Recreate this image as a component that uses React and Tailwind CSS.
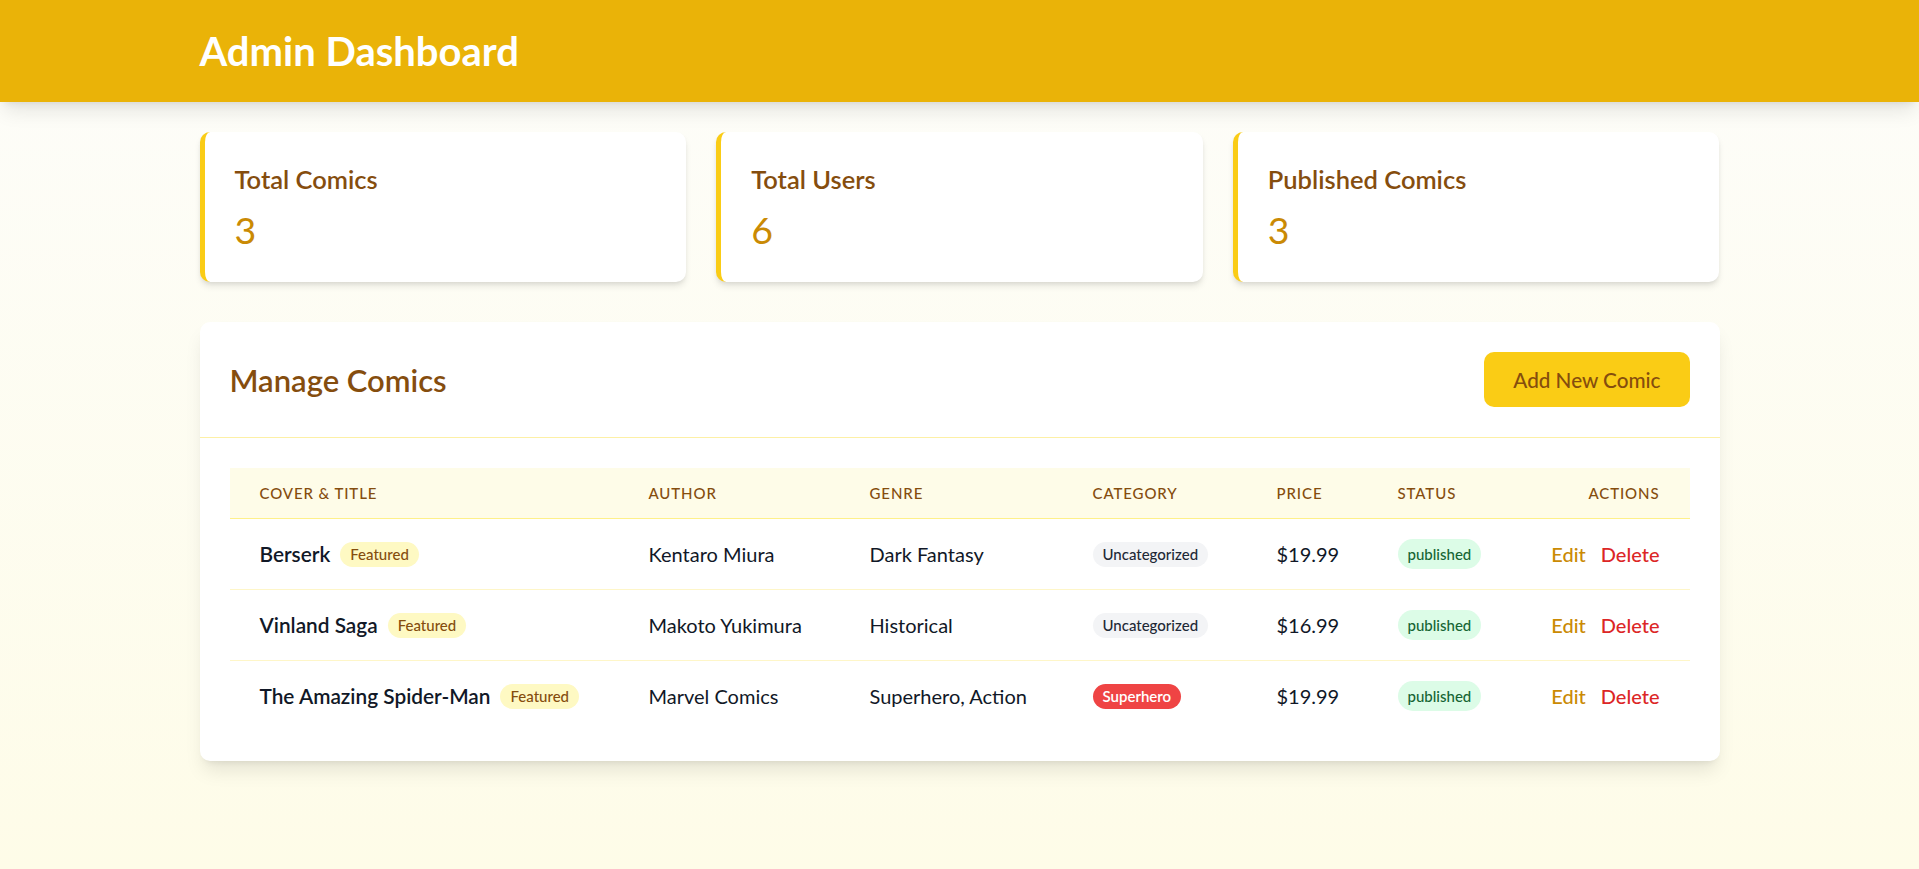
import React from "react";

const comics = [
  { title: "Berserk", author: "Kentaro Miura", genre: "Dark Fantasy", category: "Uncategorized", price: "$19.99" },
  { title: "Vinland Saga", author: "Makoto Yukimura", genre: "Historical", category: "Uncategorized", price: "$16.99" },
  { title: "The Amazing Spider-Man", author: "Marvel Comics", genre: "Superhero, Action", category: "Superhero", price: "$19.99" },
];

const stats = [
  { label: "Total Comics", value: "3" },
  { label: "Total Users", value: "6" },
  { label: "Published Comics", value: "3" },
];

const th = "px-[30px] py-[15px] text-[15px] leading-[20px] font-medium uppercase tracking-[0.06em] text-[#854d0e]";
const td = "px-[30px] py-[20px] text-[20px] leading-[30px] whitespace-nowrap";

export default function App() {
  return (
    <div className="min-h-screen bg-gradient-to-b from-[#fdfdfa] to-[#fefce8] font-['Lato','Open_Sans',sans-serif]">
      <header className="bg-[#eab308] shadow-[0_12.5px_19px_-4px_rgba(0,0,0,0.1),0_5px_7.5px_-5px_rgba(0,0,0,0.1)]">
        <div className="max-w-[1600px] mx-auto px-[40px] py-[28px]">
          <h1 className="text-[40px] leading-[46px] font-bold text-white">Admin Dashboard</h1>
        </div>
      </header>

      <main className="max-w-[1600px] mx-auto px-[40px] py-[30px]">
        <div className="grid grid-cols-3 gap-[30px] mb-[40px]">
          {stats.map((s) => (
            <div
              key={s.label}
              className="bg-white rounded-[10px] border-l-[5px] border-[#facc15] p-[30px] shadow-[0_5px_7.5px_-1.25px_rgba(0,0,0,0.1),0_2.5px_5px_-2.5px_rgba(0,0,0,0.1)]"
            >
              <h3 className="text-[25.5px] leading-[35px] font-semibold text-[#854d0e]">{s.label}</h3>
              <p className="mt-[10px] text-[37.5px] leading-[45px] text-[#ca8a04]">{s.value}</p>
            </div>
          ))}
        </div>

        <div className="bg-white rounded-[10px] overflow-hidden shadow-[0_12.5px_19px_-4px_rgba(0,0,0,0.1),0_5px_7.5px_-5px_rgba(0,0,0,0.1)]">
          <div className="flex items-center justify-between p-[30px] border-b border-[#fdf0a6]">
            <h2 className="text-[31px] leading-[40px] font-semibold text-[#854d0e]">Manage Comics</h2>
            <button className="bg-[#facc15] text-[#854d0e] text-[20.7px] leading-[30px] font-medium px-[29px] py-[12.5px] rounded-[10px]">
              Add New Comic
            </button>
          </div>

          <div className="p-[30px]">
            <table className="w-full table-fixed border-collapse">
              <thead className="bg-[#fefce8]">
                <tr className="border-b border-[#fef08a]">
                  <th className={`w-[389px] text-left ${th}`}>Cover &amp; Title</th>
                  <th className={`w-[221px] text-left ${th}`}>Author</th>
                  <th className={`w-[223px] text-left ${th}`}>Genre</th>
                  <th className={`w-[184px] text-left ${th}`}>Category</th>
                  <th className={`w-[121px] text-left ${th}`}>Price</th>
                  <th className={`w-[140px] text-left ${th}`}>Status</th>
                  <th className={`text-right ${th}`}>Actions</th>
                </tr>
              </thead>
              <tbody>
                {comics.map((c, i) => (
                  <tr key={c.title} className={i < comics.length - 1 ? "border-b border-[#fef6c8]" : ""}>
                    <td className={td}>
                      <div className="flex items-center h-[30px]">
                        <span className="text-[20.8px] font-semibold text-[#111827]">{c.title}</span>
                        <span className="ml-[10px] px-[10px] py-[2.5px] rounded-full bg-[#fef9c3] text-[#854d0e] text-[15px] leading-[20px] font-medium">Featured</span>
                      </div>
                    </td>
                    <td className={`${td} text-[#111827]`}>{c.author}</td>
                    <td className={`${td} text-[#111827]`}>{c.genre}</td>
                    <td className={td}>
                      <div className="flex items-center h-[30px]">
                        {c.category === "Superhero" ? (
                          <span className="px-[10px] py-[2.5px] rounded-full bg-[#ef4444] text-white text-[15px] leading-[20px] font-semibold">Superhero</span>
                        ) : (
                          <span className="px-[10px] py-[2.5px] rounded-full bg-[#f3f4f6] text-[#1f2937] text-[15px] leading-[20px] font-medium">Uncategorized</span>
                        )}
                      </div>
                    </td>
                    <td className={`${td} text-[#111827]`}>{c.price}</td>
                    <td className={td}>
                      <div className="flex items-center h-[30px]">
                        <span className="px-[10px] py-[5px] rounded-full bg-[#dcfce7] text-[#166534] text-[15px] leading-[20px] font-medium">published</span>
                      </div>
                    </td>
                    <td className={`${td} text-right font-medium`}>
                      <button className="text-[#ca8a04] mr-[15px]">Edit</button>
                      <button className="text-[#dc2626]">Delete</button>
                    </td>
                  </tr>
                ))}
              </tbody>
            </table>
          </div>
        </div>
      </main>
    </div>
  );
}
